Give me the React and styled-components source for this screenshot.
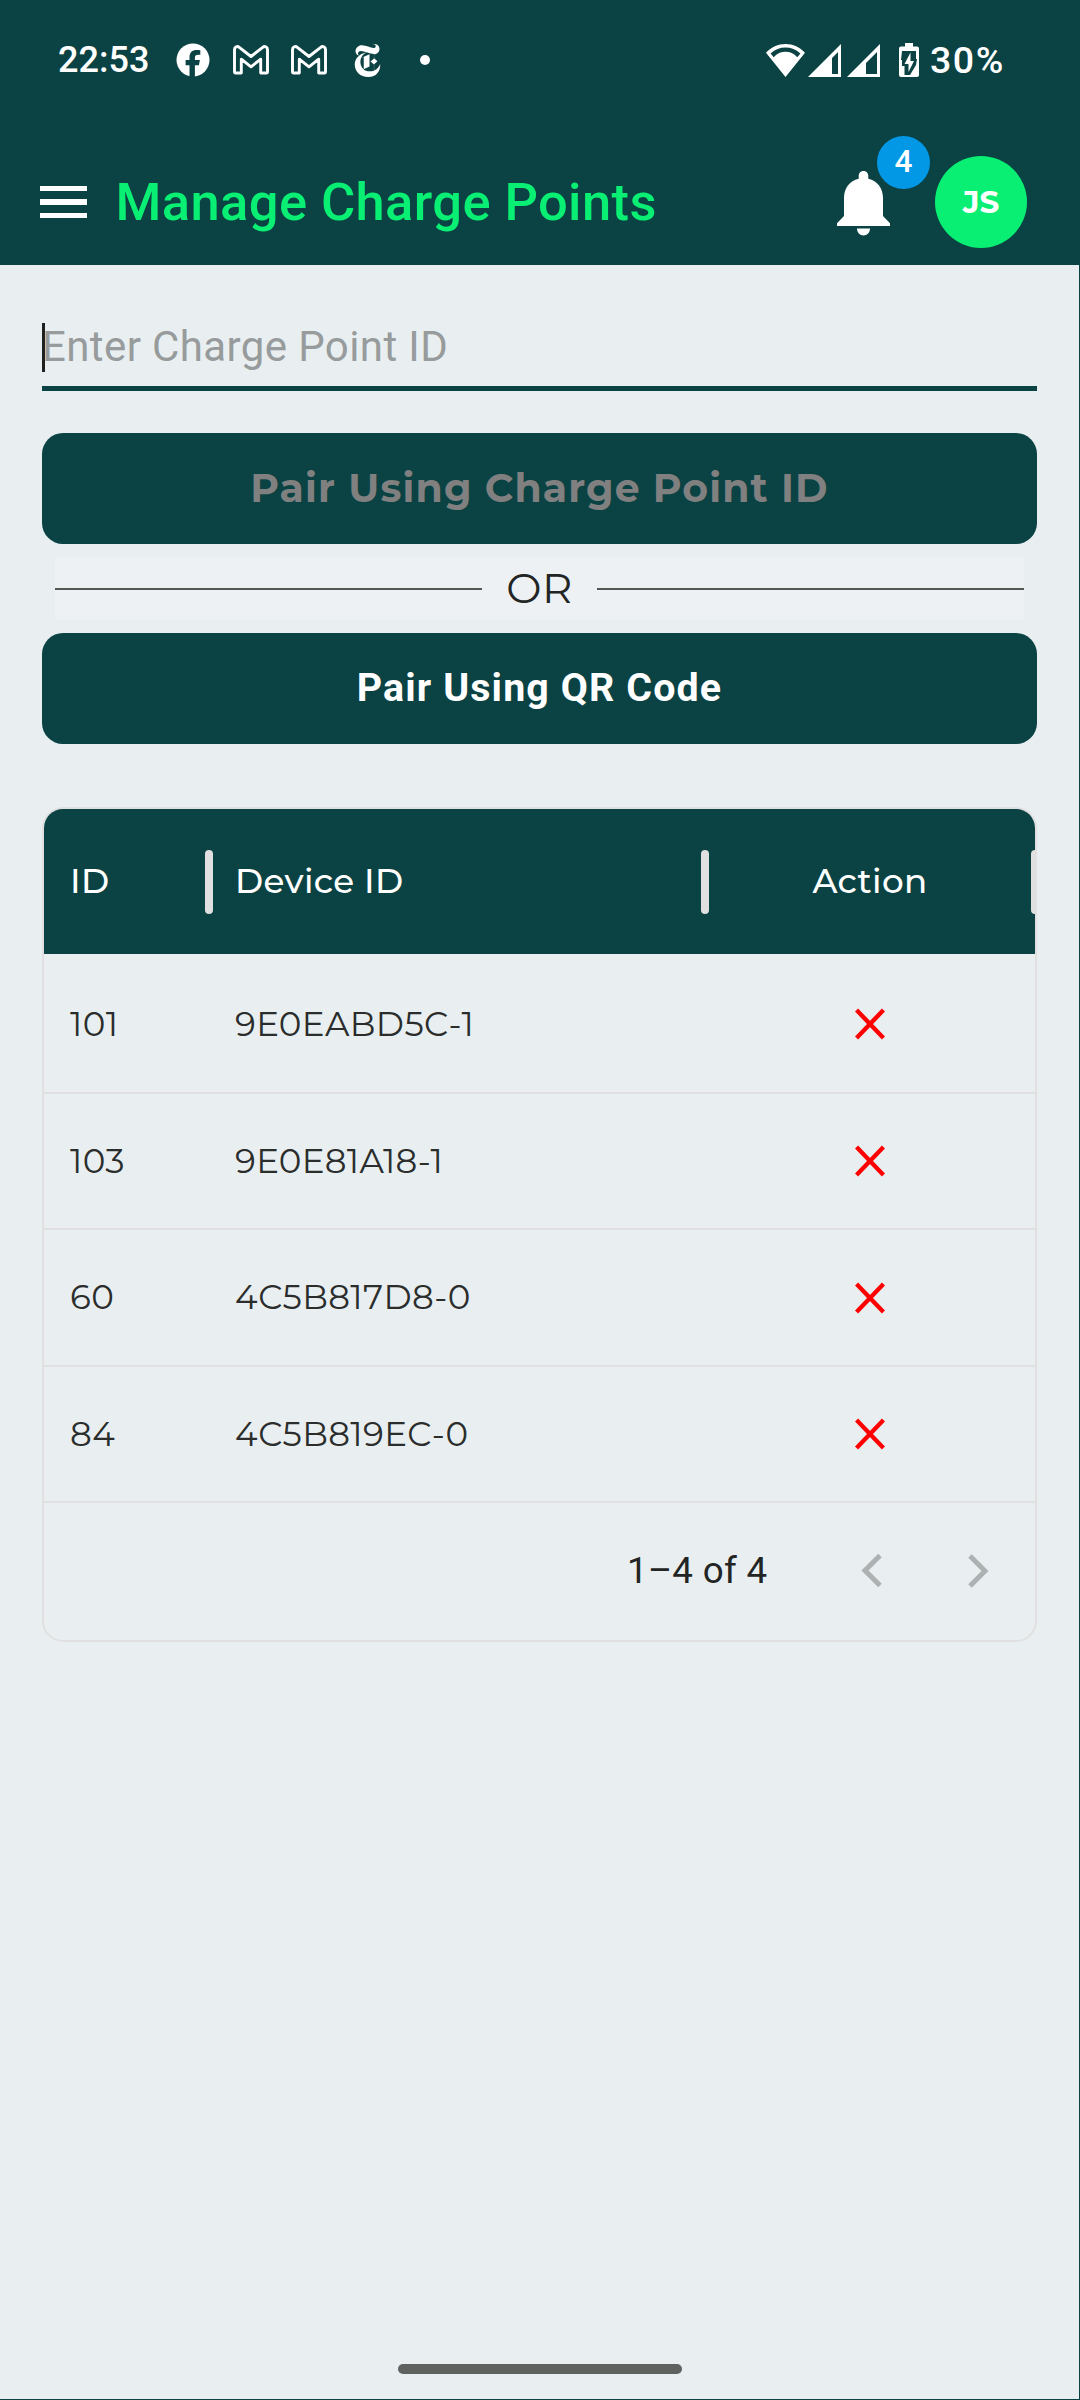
import React from "react";
import styled, { createGlobalStyle } from "styled-components";
import { SiNewyorktimes } from "react-icons/si";

const TEAL = "#0b4243";
const GREEN = "#09ef73";
const PAGE = "#e9eff1";
const LINE = "#e0e0e0";
const SANS = `Roboto, "Noto Sans", sans-serif`;
const GEO = `Montserrat, Inter, "Noto Sans", sans-serif`;

const Global = createGlobalStyle`
  *, *::before, *::after { box-sizing: border-box; }
  body { margin: 0; background: ${PAGE}; }
`;

const Screen = styled.div`
  width: 1080px;
  height: 2400px;
  display: flex;
  flex-direction: column;
  background: ${PAGE};
  font-family: ${SANS};
  color: #222524;
  overflow: hidden;
`;

const StatusBar = styled.header`
  height: 120px;
  flex: none;
  display: flex;
  align-items: center;
  justify-content: space-between;
  padding: 0 75px 0 58px;
  background: ${TEAL};
  color: #fff;
`;

const StatusGroup = styled.div`
  display: flex;
  align-items: center;
`;

const StatusText = styled.span`
  font: 500 ${(p) => p.$size || 36}px/36px ${SANS};
  letter-spacing: ${(p) => p.$ls || 0}px;
  width: ${(p) => p.$w}px;
  margin-left: ${(p) => p.$ml || 0}px;
  white-space: nowrap;
  padding-bottom: 1px;
`;

const StatusIcon = styled.svg`
  display: block;
  width: ${(p) => p.$w}px;
  height: ${(p) => p.$h}px;
  margin-left: ${(p) => p.$ml || 0}px;
  flex: none;
`;

const TimesIcon = styled(SiNewyorktimes)`
  width: 33px;
  height: 33px;
  margin-left: 24px;
`;

const Dot = styled.span`
  width: 10px;
  height: 10px;
  border-radius: 50%;
  background: #fff;
  margin-left: 36px;
`;

const AppBar = styled.nav`
  height: 145px;
  flex: none;
  display: flex;
  align-items: center;
  padding: 19px 53px 0 40px;
  background: ${TEAL};
`;

const MenuButton = styled.button`
  display: flex;
  flex-direction: column;
  gap: 8px;
  width: 47px;
  padding: 0;
  border: 0;
  background: none;
`;

const MenuBar = styled.span`
  height: 5.4px;
  background: #fff;
`;

const Title = styled.h1`
  flex: 1;
  margin: 1px 0 0 28.5px;
  font: 500 52.5px/1.2 ${SANS};
  letter-spacing: 0.39px;
  color: ${GREEN};
  white-space: nowrap;
`;

const BellWrap = styled.div`
  position: relative;
  width: 53px;
  height: 65px;
  margin: 2px 45px 0 0;
`;

const Badge = styled.span`
  position: absolute;
  left: 40px;
  top: -35px;
  width: 53px;
  height: 53px;
  border-radius: 50%;
  display: flex;
  align-items: center;
  justify-content: center;
  background: #0298e6;
  color: #fff;
  font: 500 31.5px/1 ${SANS};
`;

const Avatar = styled.div`
  width: 92px;
  height: 92px;
  border-radius: 50%;
  display: flex;
  align-items: center;
  justify-content: center;
  background: ${GREEN};
  color: #fff;
  font: 700 31px/1 ${GEO};
`;

const Content = styled.main`
  flex: 1;
  display: flex;
  flex-direction: column;
  padding: 42px 42px 0;
  border-right: 1px solid ${TEAL};
  border-bottom: 1px solid ${TEAL};
`;

const Field = styled.div`
  width: 995px;
  height: 84px;
  display: flex;
  align-items: flex-start;
  padding-top: 16px;
  border-bottom: 5px solid ${TEAL};
`;

const Caret = styled.span`
  width: 3px;
  height: 49px;
  background: #1f2121;
`;

const Placeholder = styled.span`
  font: 400 42px/48px ${SANS};
  letter-spacing: 0.39px;
  color: #979b9c;
  white-space: nowrap;
  margin-left: -3px;
`;

const PairButton = styled.button`
  width: 995px;
  height: 111px;
  flex: none;
  margin-top: ${(p) => p.$mt}px;
  padding: 0 0 ${(p) => p.$pb || 0}px;
  border: 0;
  border-radius: 21px;
  background: ${TEAL};
  color: ${(p) => (p.disabled ? "#808080" : "#fff")};
  font: 700 39.375px/1 ${(p) => (p.disabled ? GEO : SANS)};
  letter-spacing: 1.125px;
`;

const Divider = styled.div`
  width: 969px;
  height: 63px;
  flex: none;
  margin: 13px 0 0 13px;
  display: flex;
  align-items: center;
  justify-content: space-between;
  background: #edf1f4;
`;

const OrLabel = styled.span`
  font: 400 42px/1 ${GEO};
  letter-spacing: 0.39px;
  padding-bottom: 2px;
`;

const Rule = styled.span`
  width: 427px;
  height: 2px;
  background: #535753;
`;

const Table = styled.section`
  width: 995px;
  height: 835px;
  flex: none;
  margin-top: 63px;
  border: 2px solid ${LINE};
  border-radius: 21px;
  overflow: hidden;
`;

const Row = styled.div`
  display: grid;
  grid-template-columns: 165px 496px 330px;
  align-items: center;
  height: ${(p) => p.$h}px;
  padding-top: ${(p) => p.$pt || 0}px;
  border-bottom: 2px solid ${LINE};
  font: 400 34.125px/1 ${GEO};
  letter-spacing: 0.37px;
  color: #2a2d2c;
`;

const HeadRow = styled(Row)`
  background: ${TEAL};
  color: #fff;
  font-weight: 500;
  border-bottom: 0;
`;

const Cell = styled.div`
  display: flex;
  align-items: center;
  height: 64px;
  padding-left: ${(p) => p.$pl || 0}px;
  padding-right: ${(p) => p.$pr || 0}px;
  justify-content: ${(p) => (p.$center ? "center" : "flex-start")};
  position: relative;
  white-space: nowrap;
`;

const Grip = styled.span`
  position: absolute;
  right: -4px;
  top: 0;
  width: 8px;
  height: 64px;
  border-radius: 4px;
  background: ${LINE};
`;

const Footer = styled.div`
  height: 136px;
  display: flex;
  align-items: center;
  padding-left: 583px;
`;

const Range = styled.span`
  width: 222px;
  font: 400 36.75px/1 ${SANS};
  letter-spacing: 0.3px;
  white-space: nowrap;
`;

const Pager = styled.svg`
  width: 40px;
  height: 40px;
  margin-right: ${(p) => p.$mr || 0}px;
`;

const HomeBar = styled.div`
  align-self: center;
  width: 284px;
  height: 10px;
  border-radius: 5px;
  background: #5f615f;
  margin: auto 0 25px;
`;

const Facebook = () => (
  <StatusIcon $w={34} $h={34} viewBox="0 0 34 34">
    <circle cx="17" cy="17" r="16.5" fill="#fff" />
    <path d="M13.5 34V22.3H9.6v-5.2h3.9v-2.6c0-5.2 2.6-7.6 7.4-7.6 1.4 0 2.8.2 3.4.4v4.5h-2.2c-2.4 0-3.2 1.2-3.2 3v2.3h5l-1 5.2h-4V34z" fill={TEAL} />
  </StatusIcon>
);

const Gmail = ({ ml }) => (
  <StatusIcon $w={36} $h={30} $ml={ml} viewBox="0 0 36 30">
    <path
      d="M1.5 4.6C1.5 1.8 4.4.8 6.3 2.3L18 11.5 29.7 2.3c1.9-1.5 4.8-.5 4.8 2.3v22.1c0 .8-.5 1.3-1.3 1.3h-5.5V14.2L18 21.8l-9.7-7.6V28H2.8c-.8 0-1.3-.5-1.3-1.3z"
      fill="none" stroke="#fff" strokeWidth="2.9" strokeLinejoin="round"
    />
  </StatusIcon>
);

const Wifi = () => (
  <StatusIcon $w={39} $h={33} viewBox="0 0 39 33">
    <path fillRule="evenodd" fill="#fff" d="M19.5 33L0 8.8C5.2 3 12 0 19.5 0S33.8 3 39 8.8zM4.6 9.4L7.7 13.2C11 9.6 15 7.8 19.5 7.8S28 9.6 31.3 13.2L34.4 9.4C30 5.5 25 3.5 19.5 3.5S9 5.5 4.6 9.4z" />
  </StatusIcon>
);

const Signal = ({ ml, from }) => (
  <StatusIcon $w={33} $h={33} $ml={ml} viewBox="0 0 33 33">
    <path fillRule="evenodd" fill="#fff" d={`M0 33L33 0V33zM${from} 30H30V8L${from} ${38 - from}z`} />
  </StatusIcon>
);

const Battery = () => (
  <StatusIcon $w={20} $h={34} $ml={19} viewBox="0 0 20 34">
    <path fill="#fff" d="M6 0h8v3.5h4a2 2 0 0 1 2 2V32a2 2 0 0 1-2 2H2a2 2 0 0 1-2-2V5.5a2 2 0 0 1 2-2h4z" />
    <path fill={TEAL} d="M3 8h14v8h1l-1 6-6 10H5.5v-9H3v-6H2z" />
    <path fill="#fff" d="M11.5 9.5L5.5 21H9.5V29L15 18H11.5z" />
  </StatusIcon>
);

const Bell = () => (
  <svg width="53" height="65" viewBox="0 0 53 65">
    <path fill="#fff" d="M26.5 0c3 0 4.8 2.2 4.8 5v2.8C40.5 10 46 17.5 46 27v18l7 7.2V55H0v-2.8L7 45V27C7 17.5 12.5 10 21.7 7.8V5c0-2.8 1.8-5 4.8-5zM20 57.5h13c0 4-2.8 7-6.500 7s-6.500-3-6.500-7z" />
  </svg>
);

const Cross = () => (
  <svg width="30" height="32" viewBox="0 0 30 32">
    <path d="M1.5 2L28.5 30M28.5 2L1.5 30" stroke="#f00" strokeWidth="4.4" />
  </svg>
);

const rows = [
  { id: "101", device: "9E0EABD5C-1", h: 140, pt: 2 },
  { id: "103", device: "9E0E81A18-1", h: 136 },
  { id: "60", device: "4C5B817D8-0", h: 137 },
  { id: "84", device: "4C5B819EC-0", h: 136 },
];

export default function App() {
  return (
    <>
      <Global />
      <Screen>
        <StatusBar>
          <StatusGroup>
            <StatusText $w={118}>22:53</StatusText>
            <Facebook />
            <Gmail ml={23} />
            <Gmail ml={22} />
            <TimesIcon />
            <Dot />
          </StatusGroup>
          <StatusGroup>
            <Wifi />
            <Signal ml={3} from={24} />
            <Signal ml={6} from={19} />
            <Battery />
            <StatusText $w={75} $ml={11} $ls={1.5} $size={37.5}>30%</StatusText>
          </StatusGroup>
        </StatusBar>
        <AppBar>
          <MenuButton aria-label="Menu"><MenuBar /><MenuBar /><MenuBar /></MenuButton>
          <Title>Manage Charge Points</Title>
          <BellWrap><Bell /><Badge>4</Badge></BellWrap>
          <Avatar>JS</Avatar>
        </AppBar>
        <Content>
          <Field><Caret /><Placeholder>Enter Charge Point ID</Placeholder></Field>
          <PairButton disabled $mt={42}>Pair Using Charge Point ID</PairButton>
          <Divider><Rule /><OrLabel>OR</OrLabel><Rule /></Divider>
          <PairButton $mt={13} $pb={2}>Pair Using QR Code</PairButton>
          <Table>
            <HeadRow $h={145}>
              <Cell $pl={26}>ID<Grip /></Cell>
              <Cell $pl={26}>Device ID<Grip /></Cell>
              <Cell $center>Action<Grip /></Cell>
            </HeadRow>
            {rows.map((r) => (
              <Row key={r.id} $h={r.h} $pt={r.pt}>
                <Cell $pl={26}>{r.id}</Cell>
                <Cell $pl={26}>{r.device}</Cell>
                <Cell $center $pr={1}><Cross /></Cell>
              </Row>
            ))}
            <Footer>
              <Range>1–4 of 4</Range>
              <Pager $mr={64} viewBox="0 0 40 40">
                <path d="M31 4.5L16 19.5L31 34.5" fill="none" stroke="#adb1b2" strokeWidth="5" />
              </Pager>
              <Pager viewBox="0 0 40 40">
                <path d="M17 5L32 20L17 35" fill="none" stroke="#adb1b2" strokeWidth="5" />
              </Pager>
            </Footer>
          </Table>
          <HomeBar />
        </Content>
      </Screen>
    </>
  );
}
